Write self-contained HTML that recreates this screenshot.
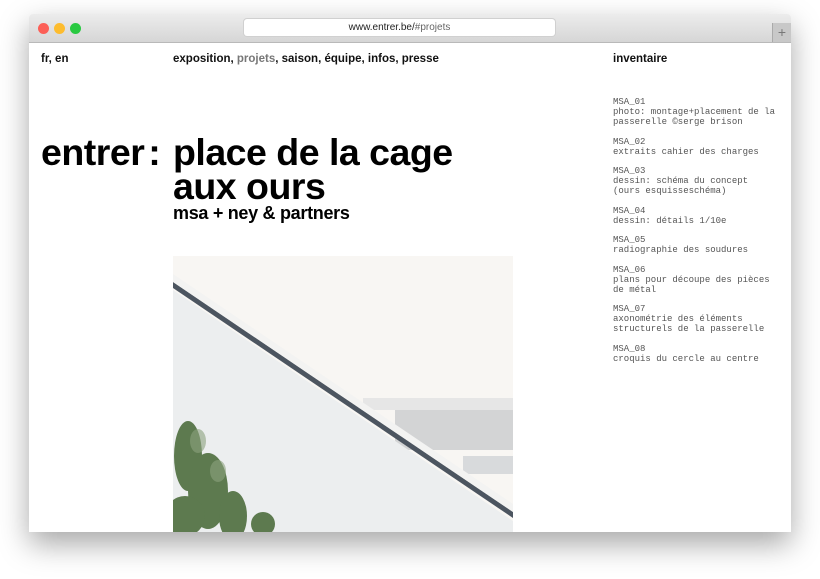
<!DOCTYPE html>
<html><head><meta charset="utf-8"><style>
body{margin:0;width:820px;height:579px;background:#fff;position:relative;overflow:hidden;font-family:"Liberation Sans",sans-serif}
.win{position:absolute;left:29px;top:14px;width:762px;height:518px;background:#fff;box-shadow:0 12px 30px rgba(0,0,0,.35);border-radius:4px 4px 0 0;overflow:hidden}
.bar{position:absolute;left:0;top:0;width:762px;height:28px;background:linear-gradient(#ececec,#d6d6d6);border-bottom:1px solid #b9b9b9}
.dot{position:absolute;top:9px;width:11px;height:11px;border-radius:50%}
.url{position:absolute;left:215px;top:5px;width:311px;height:17px;background:#fff;border-radius:3px;box-shadow:0 0 0 1px #d0d0d0;font-size:10px;text-align:center;line-height:17px;color:#222}
.plus{position:absolute;right:0;top:9px;width:18px;height:19px;background:#c8c8c8;border-left:1px solid #aaa;color:#777;font-size:14px;text-align:center;line-height:19px}
.nav{position:absolute;top:39px;font-size:11.5px;font-weight:bold;color:#111}
h1{position:absolute;margin:0;font-size:37.5px;font-weight:bold;line-height:34px;letter-spacing:-0.5px}
.sub{position:absolute;left:144px;top:189px;font-size:18px;font-weight:bold;letter-spacing:-0.3px}
.inv{position:absolute;left:584px;top:83px;font-family:"Liberation Mono",monospace;font-size:9px;line-height:10px;color:#555}
.inv p{margin:0 0 9.5px}
</style></head><body>
<div class="win">
<div class="bar">
<div class="dot" style="left:9px;background:#fc5f57"></div>
<div class="dot" style="left:25px;background:#fdbc2e"></div>
<div class="dot" style="left:41px;background:#29c941"></div>
<div class="url">www.entrer.be/<span style="color:#666">#projets</span></div>
<div class="plus">+</div>
</div>
<div class="nav" style="left:12px">fr, en</div>
<div class="nav" style="left:144px">exposition, <span style="color:#777">projets</span>, saison, équipe, infos, presse</div>
<div class="nav" style="left:584px">inventaire</div>
<h1 style="left:12px;top:121px">entrer<span style="margin-left:4px">:</span></h1>
<h1 style="left:144px;top:121px">place de la cage<br>aux ours</h1>
<div class="sub">msa + ney &amp; partners</div>
<svg style="position:absolute;left:144px;top:242px" width="340" height="276" viewBox="0 0 340 276">
<rect width="340" height="276" fill="#f8f6f3"/>
<rect x="190" y="142" width="150" height="12" fill="#e6e6e6"/>
<rect x="222" y="154" width="118" height="40" fill="#d3d4d5"/>
<rect x="290" y="200" width="50" height="18" fill="#d8dadc"/>
<polygon points="0,34 340,265 340,276 0,276" fill="#eceeef"/>
<polygon points="0,26 340,256 340,262 0,32" fill="#4c5560"/>
<polygon points="0,18 340,248 340,256 0,26" fill="#f3f3f2"/>
<g fill="#5d7a4f">
<ellipse cx="15" cy="200" rx="14" ry="35"/><ellipse cx="35" cy="235" rx="20" ry="38"/><ellipse cx="12" cy="260" rx="20" ry="20"/><ellipse cx="60" cy="260" rx="14" ry="25"/><ellipse cx="90" cy="268" rx="12" ry="12"/>
</g>
<g fill="#8da27e" opacity=".6"><ellipse cx="25" cy="185" rx="8" ry="12"/><ellipse cx="45" cy="215" rx="8" ry="11"/></g>
</svg>
<div class="inv">
<p>MSA_01<br>photo: montage+placement de la<br>passerelle ©serge brison</p>
<p>MSA_02<br>extraits cahier des charges</p>
<p>MSA_03<br>dessin: schéma du concept<br>(ours esquisseschéma)</p>
<p>MSA_04<br>dessin: détails 1/10e</p>
<p>MSA_05<br>radiographie des soudures</p>
<p>MSA_06<br>plans pour découpe des pièces<br>de métal</p>
<p>MSA_07<br>axonométrie des éléments<br>structurels de la passerelle</p>
<p>MSA_08<br>croquis du cercle au centre</p>
</div>
</div>
</body></html>
